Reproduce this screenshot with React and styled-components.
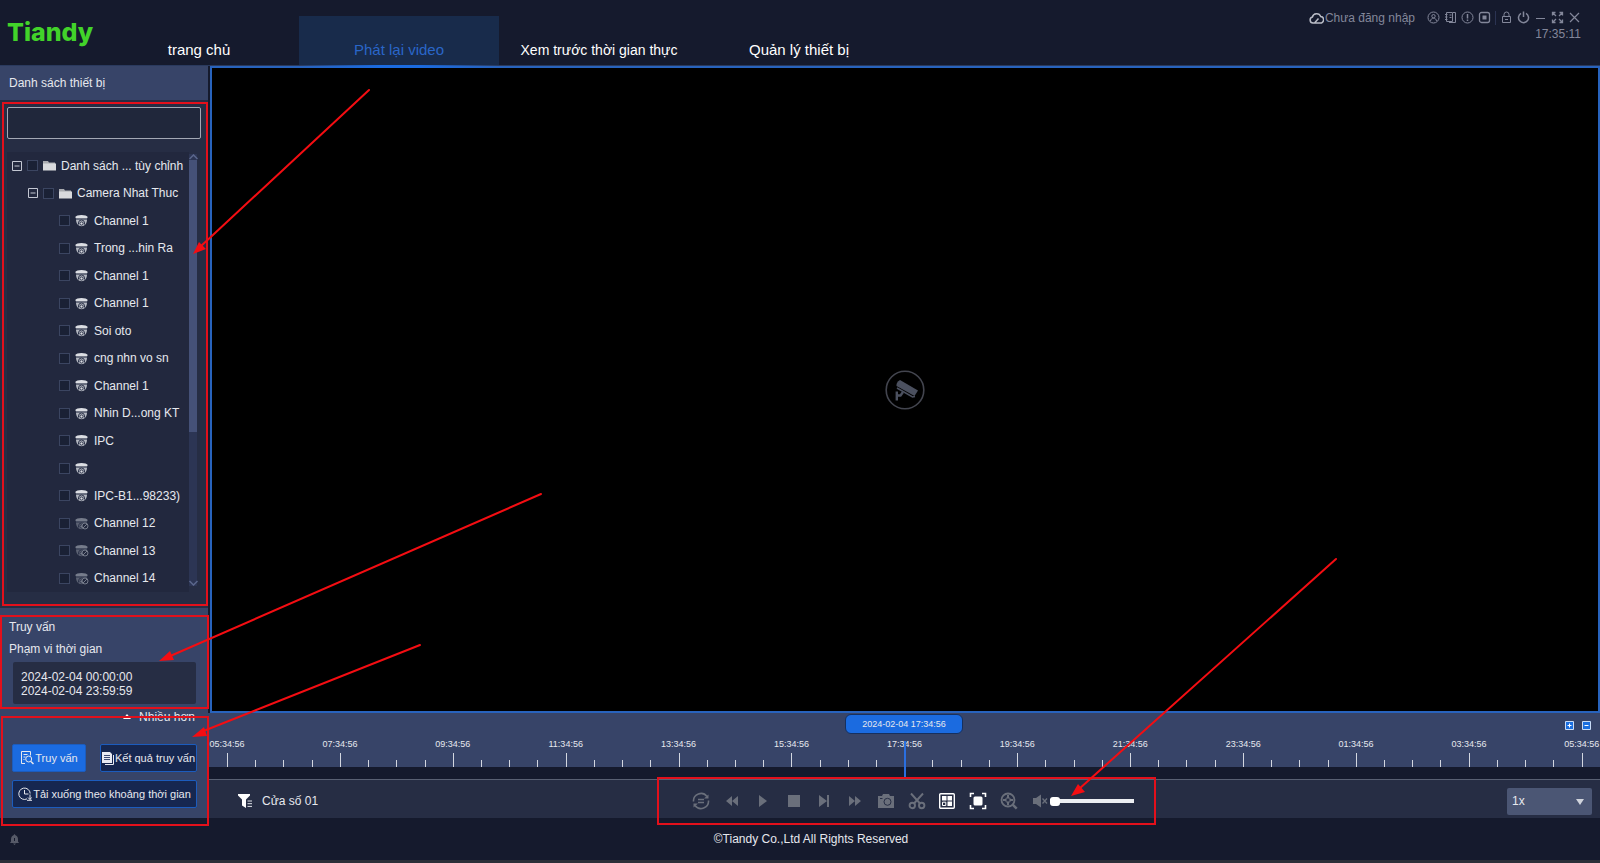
import React from 'react';
import styled, { createGlobalStyle, css } from 'styled-components';

const channels = [
  { name: 'Channel 1' },
  { name: 'Trong ...hin Ra' },
  { name: 'Channel 1' },
  { name: 'Channel 1' },
  { name: 'Soi oto' },
  { name: 'cng nhn vo sn' },
  { name: 'Channel 1' },
  { name: 'Nhin D...ong KT' },
  { name: 'IPC' },
  { name: '' },
  { name: 'IPC-B1...98233)' },
  { name: 'Channel 12', offline: true },
  { name: 'Channel 13', offline: true },
  { name: 'Channel 14', offline: true },
];

const hours = [
  '05:34:56', '07:34:56', '09:34:56', '11:34:56', '13:34:56', '15:34:56', '17:34:56',
  '19:34:56', '21:34:56', '23:34:56', '01:34:56', '03:34:56', '05:34:56',
];

const ticks = Array.from({ length: 49 }, (_, i) => i % 4 === 0);

export default function App() {
  return (
    <Page>
      <GlobalStyle />
      <Header>
        <Logo>Tiandy</Logo>
        <Nav>
          <Tab href="#home">trang chủ</Tab>
          <Tab href="#playback" $active>Phát lại video</Tab>
          <Tab href="#live" $small>Xem trước thời gian thực</Tab>
          <Tab href="#devices">Quản lý thiết bị</Tab>
        </Nav>
        <Status>
          <StatusRow>
            <Login type="button"><CloudIcon />Chưa đăng nhập</Login>
            <HeadButton type="button" aria-label="user"><UserIcon /></HeadButton>
            <HeadButton type="button" aria-label="log"><LogIcon /></HeadButton>
            <HeadButton type="button" aria-label="alarm"><AlertIcon /></HeadButton>
            <HeadButton type="button" aria-label="cpu"><ChipIcon /></HeadButton>
            <Divider />
            <HeadButton type="button" aria-label="lock"><LockIcon /></HeadButton>
            <HeadButton type="button" aria-label="power"><PowerIcon /></HeadButton>
            <HeadButton type="button" aria-label="minimize"><MinimizeIcon /></HeadButton>
            <HeadButton type="button" aria-label="full screen"><ExpandIcon /></HeadButton>
            <HeadButton type="button" aria-label="close"><CloseIcon /></HeadButton>
          </StatusRow>
          <Clock>17:35:11</Clock>
        </Status>
      </Header>

      <Body>
        <Sidebar>
          <SideTitle>Danh sách thiết bị</SideTitle>
          <DevicePanel>
            <Search type="text" aria-label="search" />
            <TreeArea>
              <Tree>
                <TreeRow $level={0}>
                  <Toggle type="button" aria-label="collapse"><MinusBox /></Toggle>
                  <Check type="checkbox" id="root-node" />
                  <FolderIcon />
                  <label htmlFor="root-node">Danh sách ... tùy chỉnh</label>
                </TreeRow>
                <TreeRow $level={1}>
                  <Toggle type="button" aria-label="collapse"><MinusBox /></Toggle>
                  <Check type="checkbox" id="group-node" />
                  <FolderIcon />
                  <label htmlFor="group-node">Camera Nhat Thuc</label>
                </TreeRow>
                {channels.map((c, i) => (
                  <TreeRow $level={3} key={i}>
                    <Check type="checkbox" id={`ch-${i}`} aria-label={c.name || 'camera'} />
                    <DomeIcon offline={c.offline} />
                    <label htmlFor={`ch-${i}`}>{c.name}</label>
                  </TreeRow>
                ))}
              </Tree>
              <Scrollbar>
                <Chevron up />
                <Thumb />
                <Chevron />
              </Scrollbar>
            </TreeArea>
          </DevicePanel>

          <QueryPanel>
            <QueryText>Truy vấn</QueryText>
            <QueryText as="label" htmlFor="range">Phạm vi thời gian</QueryText>
            <DateRange
              id="range"
              rows={2}
              readOnly
              value={'2024-02-04 00:00:00\n2024-02-04 23:59:59'}
            />
            <More type="button"><UpIcon />Nhiều hơn</More>
            <Actions>
              <Action type="button" $primary><QueryIcon />Truy vấn</Action>
              <Action type="button"><ResultIcon />Kết quả truy vấn</Action>
              <Action type="button" $wide><ClockIcon />Tải xuống theo khoảng thời gian</Action>
            </Actions>
          </QueryPanel>
        </Sidebar>

        <Main>
          <Video><CctvIcon /></Video>
          <Timeline>
            <Zoomers>
              <Zoomer type="button" aria-label="zoom in"><ScaleIcon plus /></Zoomer>
              <Zoomer type="button" aria-label="zoom out"><ScaleIcon /></Zoomer>
            </Zoomers>
            <Hours>
              {hours.map((h, i) => <Hour key={i}>{h}</Hour>)}
            </Hours>
            <Ticks>
              {ticks.map((major, i) => <Tick key={i} $major={major} />)}
            </Ticks>
            <NowBadge>2024-02-04 17:34:56</NowBadge>
            <NowLine />
          </Timeline>
          <Toolbar>
            <WindowName><FilterIcon />Cửa số 01</WindowName>
            <Controls>
              <Tool type="button" aria-label="sync"><SyncIcon /></Tool>
              <Tool type="button" aria-label="rewind"><Glyph><path d="M9 4v10L3 9zM15 4v10L9 9z" /></Glyph></Tool>
              <Tool type="button" aria-label="play"><Glyph><path d="M5 3l8 6-8 6z" /></Glyph></Tool>
              <Tool type="button" aria-label="stop"><Glyph><path d="M3 3h12v12H3z" /></Glyph></Tool>
              <Tool type="button" aria-label="next frame"><Glyph><path d="M4 3l8 6-8 6zM12 3h2v12h-2z" /></Glyph></Tool>
              <Tool type="button" aria-label="forward"><Glyph><path d="M3 4l6 5-6 5zM9 4l6 5-6 5z" /></Glyph></Tool>
              <Tool type="button" aria-label="snapshot"><CameraIcon /></Tool>
              <Tool type="button" aria-label="cut"><ScissorsIcon /></Tool>
              <Tool type="button" aria-label="layout" $on><LayoutIcon /></Tool>
              <Tool type="button" aria-label="fit" $on><FitIcon /></Tool>
              <Tool type="button" aria-label="digital zoom"><MagnifyIcon /></Tool>
              <Tool type="button" aria-label="mute"><MuteIcon /></Tool>
              <Volume type="range" min="0" max="100" defaultValue="0" aria-label="volume" />
            </Controls>
            <SpeedBox>
              <Speed aria-label="speed" defaultValue="1x">
                <option>1x</option>
                <option>2x</option>
                <option>4x</option>
              </Speed>
              <Caret />
            </SpeedBox>
          </Toolbar>
        </Main>
      </Body>

      <Footer>
        <BellIcon />
        <Copyright>©Tiandy Co.,Ltd All Rights Reserved</Copyright>
      </Footer>
      <Marks />
    </Page>
  );
}

/* ---------- icons ---------- */

const line = { fill: 'none', stroke: 'currentColor' };

const CloudIcon = () => (
  <svg width="15" height="12" viewBox="0 0 15 12" {...line} stroke="#b9bcc6" strokeWidth="1.5">
    <path d="M5.500 11H4a3 3 0 0 1-.6-5.900A4.300 4.300 0 0 1 11.700 4.600 3.200 3.200 0 0 1 11 11H5.500l4-4.500" />
  </svg>
);

const UserIcon = () => (
  <svg width="13" height="13" viewBox="0 0 13 13" {...line}>
    <circle cx="6.500" cy="6.500" r="5.500" />
    <circle cx="6.500" cy="5.200" r="1.700" />
    <path d="M3.500 10c.3-2 1.500-2.800 3-2.800s2.700.8 3 2.800" />
  </svg>
);

const LogIcon = () => (
  <svg width="13" height="13" viewBox="0 0 13 13" {...line}>
    <path d="M2.500 1.500h6v9h-6zM1 3.500h2.500M1 6h2.500M1 8.500h2.500M5.500 4h2M5.500 6.500h2M9 1.500h2.500v10H5" />
  </svg>
);

const AlertIcon = () => (
  <svg width="13" height="13" viewBox="0 0 13 13" {...line}>
    <circle cx="6.500" cy="6.500" r="5.500" />
    <path d="M6.500 3v4.500M6.500 8.600v1.400" strokeWidth="1.500" />
  </svg>
);

const ChipIcon = () => (
  <svg width="13" height="13" viewBox="0 0 13 13" {...line}>
    <rect x="1.500" y="1.500" width="10" height="10" rx="2" strokeWidth="1.300" />
    <path d="M4.500 4.500h4v4h-4z" fill="currentColor" stroke="none" />
  </svg>
);

const LockIcon = () => (
  <svg width="13" height="13" viewBox="0 0 13 13" {...line}>
    <path d="M2.500 5.500h8v6h-8zM4 5.500V3.500a2.500 2.500 0 0 1 5 0v2M5 8.500h3" />
  </svg>
);

const PowerIcon = () => (
  <svg width="13" height="13" viewBox="0 0 13 13" {...line} strokeWidth="1.500">
    <path d="M4 2.300a5 5 0 1 0 5 0M6.500 .5v5.500" />
  </svg>
);

const MinimizeIcon = () => (
  <svg width="13" height="13" viewBox="0 0 13 13" {...line}><path d="M2 7.500h9" /></svg>
);

const ExpandIcon = () => (
  <svg width="13" height="13" viewBox="0 0 13 13" {...line} strokeWidth="1.300">
    <path d="M1.500 4.500v-3h3M8.500 1.500h3v3M11.500 8.500v3h-3M4.500 11.500h-3v-3M2 2l3 3M11 2L8 5M2 11l3-3M11 11L8 8" />
  </svg>
);

const CloseIcon = () => (
  <svg width="13" height="13" viewBox="0 0 13 13" {...line} strokeWidth="1.200"><path d="M2 2l9 9M11 2l-9 9" /></svg>
);

const MinusBox = () => (
  <svg width="10" height="10" viewBox="0 0 10 10" fill="none" stroke="#c3c7d2">
    <path d="M.5 .5h9v9h-9zM2.500 5h5" />
  </svg>
);

const FolderIcon = () => (
  <svg width="13" height="11" viewBox="0 0 13 11">
    <path d="M0 2V1h5l1 1.500h6V4H0z" fill="#a9abb0" />
    <path d="M0 3.500h13V10.500H0z" fill="#d9dadd" />
  </svg>
);

function DomeIcon({ offline }) {
  const color = offline ? '#767c8b' : '#dcdee3';
  return (
    <svg width="14" height="13" viewBox="0 0 14 13">
      <path d="M.3 3C1 .2 12 .2 12.700 3L12 4.500H1z" fill={color} />
      <path d="M1 5.300h11c0 4-2 7-5.500 7S1 9.300 1 5.300z" fill={offline ? '#5c6273' : '#b4b8c1'} />
      <path d="M1 5.200h11" stroke="#3a4058" strokeWidth=".7" />
      <path d="M3.500 10.500V9a3 3 0 0 1 6 0v1.500" fill="none" stroke="#2c334a" />
      <circle cx="6.500" cy="9.500" r="1.600" fill={color} stroke="#2c334a" />
      {offline && (
        <>
          <circle cx="10" cy="9" r="3" fill="#22283e" stroke={color} />
          <path d="M8 11l4-4" stroke={color} />
        </>
      )}
    </svg>
  );
}

function Chevron({ up }) {
  return (
    <svg width="9" height="6" viewBox="0 0 9 6" fill="none" stroke="#5b678c" strokeWidth="1.500">
      <path d={up ? 'M.5 5l4-4 4 4' : 'M.5 1l4 4 4-4'} />
    </svg>
  );
}

const UpIcon = () => (
  <svg width="8" height="6" viewBox="0 0 8 6"><path d="M0 5l4-5 4 5z" fill="#fff" /></svg>
);

const QueryIcon = () => (
  <svg width="14" height="14" viewBox="0 0 14 14" {...line}>
    <path d="M5 12.500H1.500V.5h9v4M3.500 3.500h4M3.500 6h2M3.500 8.500h1" />
    <circle cx="8.700" cy="8" r="3" />
    <path d="M11 10.500l2.500 2.500" strokeWidth="1.500" />
  </svg>
);

const ResultIcon = () => (
  <svg width="12" height="13" viewBox="0 0 12 13">
    <path d="M3 12.500h8.500V3" fill="none" stroke="#e8ebf3" />
    <path d="M0 0h8l2 2v9H0z" fill="#e8ebf3" />
    <path d="M2 3.500h6M2 5.500h6M2 7.500h6" stroke="#3b4a73" />
  </svg>
);

const ClockIcon = () => (
  <svg width="14" height="14" viewBox="0 0 14 14" {...line}>
    <path d="M9 11.900A5.700 5.700 0 1 1 12.200 6.500M6.500 3v4h4M12 7.500v5M10 10.500l2 2 1.500-2M9 13.300h5" />
  </svg>
);

/* bullet camera in a ring, shown while nothing is playing */
const CctvIcon = () => (
  <svg width="40" height="40" viewBox="0 0 40 40">
    <circle cx="20" cy="20" r="18.800" fill="none" stroke="#43454f" strokeWidth="1.600" />
    <path d="M15 10l18 10.500-3.500 5.500-18-10q-.5-3.500 3.500-6z" fill="#4b505f" />
    <path d="M12 18l15.500 9 2.500-.5" fill="none" stroke="#4b505f" strokeWidth="1.600" />
    <path d="M11.800 21.500v9M12 25.500h3.500l2.500-3.500" fill="none" stroke="#4b505f" strokeWidth="2.400" />
  </svg>
);

function ScaleIcon({ plus }) {
  return (
    <svg width="9" height="9" viewBox="0 0 9 9">
      <path d="M.5 .5h8v8h-8z" fill="#1b6fe0" stroke="#c9dcf7" />
      <path d={plus ? 'M2.500 4.500h4M4.500 2.500v4' : 'M2.500 4.500h4'} stroke="#fff" />
    </svg>
  );
}

const FilterIcon = () => (
  <svg width="15" height="14" viewBox="0 0 15 14">
    <path d="M0 0h12v1.500L8 5.500V14L4 11.500v-6L0 1.500z" fill="#fff" />
    <path d="M9.500 7h4.500M9.500 9.700h4.500M9.500 12.400h4.500" stroke="#dfe2e8" />
  </svg>
);

const Glyph = ({ children }) => (
  <svg width="18" height="18" viewBox="0 0 18 18" fill="currentColor">{children}</svg>
);

const SyncIcon = () => (
  <svg width="18" height="18" viewBox="0 0 18 18" {...line} strokeWidth="1.600">
    <path d="M1.500 9.500A7.500 7.500 0 0 1 15 4.500M16.500 8.500A7.500 7.500 0 0 1 3 13.500M6 7.500h6M6 10.500h6" />
    <path d="M16.500 2.500v4h-4.500zM1.500 15.500v-4H6z" fill="currentColor" stroke="none" />
  </svg>
);

const CameraIcon = () => (
  <svg width="18" height="18" viewBox="0 0 18 18">
    <path d="M1 4h4l1-2h6l1 2h4v12H1z" fill="currentColor" />
    <circle cx="10.500" cy="9.800" r="3.500" fill="none" stroke="#262d44" />
    <path d="M3 6.500h2.500" stroke="#262d44" />
  </svg>
);

const ScissorsIcon = () => (
  <svg width="18" height="18" viewBox="0 0 18 18" {...line} strokeWidth="1.900">
    <path d="M3 1.500l9 10M15 1.500L6 11.500" />
    <circle cx="4.300" cy="13.500" r="2.700" />
    <circle cx="13.700" cy="13.500" r="2.700" />
  </svg>
);

const LayoutIcon = () => (
  <svg width="18" height="18" viewBox="0 0 18 18">
    <rect x="1.700" y="1.700" width="14.600" height="14.600" rx="1" fill="none" stroke="currentColor" strokeWidth="1.400" />
    <path d="M4 4h4.500v4.500H4zM9.500 4H14v4.500H9.500zM9.500 9.500H14V14H9.500z" fill="currentColor" />
    <path d="M4.500 10.200h3.300v3.300H4.500z" fill="none" stroke="currentColor" />
  </svg>
);

const FitIcon = () => (
  <svg width="18" height="18" viewBox="0 0 18 18">
    <path d="M1.500 5V1.500H5M13 1.500h3.500V5M16.500 13v3.500H13M5 16.500H1.500V13" {...line} strokeWidth="1.600" />
    <rect x="4.500" y="4.500" width="9" height="9" rx="1.500" fill="currentColor" />
  </svg>
);

const MagnifyIcon = () => (
  <svg width="18" height="18" viewBox="0 0 18 18" {...line} strokeWidth="1.800">
    <circle cx="8" cy="8" r="6.500" />
    <path d="M8 3v3.500M8 9.500V13M3 8h3.500M9.500 8H13" strokeWidth="2" />
    <circle cx="8" cy="8" r="2.500" strokeWidth="1" />
    <path d="M12.700 12.700l4 4" strokeWidth="2.500" />
  </svg>
);

const MuteIcon = () => (
  <svg width="16" height="14" viewBox="0 0 16 14">
    <path d="M1 4h3l5-3.500v13L4 10H1z" fill="currentColor" />
    <path d="M10.500 4.500l4.500 5M15 4.500l-4.500 5" stroke="currentColor" strokeWidth="1.300" />
  </svg>
);

const BellIcon = () => (
  <svg width="9" height="11" viewBox="0 0 9 11" fill="#565a68">
    <path d="M4.500 0l1 1.200C7.500 2 8 3.500 8 5.500v2l1 1.500H0l1-1.500v-2c0-2 .5-3.500 2.500-4.300zM3 9.500h3L4.500 11z" />
    <path d="M4.500 4v3" stroke="#151a2d" />
  </svg>
);

/* red callouts drawn over the whole window */
const Marks = () => (
  <MarkLayer width="1600" height="863" viewBox="0 0 1600 863" aria-hidden="true">
    <g fill="none" stroke="#e3101b" strokeWidth="2">
      <path d="M3 103h204v502H3z" />
      <path d="M1 616h207v92H1z" />
      <path d="M2 717h206v108H2z" />
      <path d="M658 778h497v46H658z" />
    </g>
    <g stroke="#f40d12" strokeWidth="2" fill="#f40d12">
      <path d="M369 90L200 247M541 494L168 657M420 645L201 732M1336 559L1079 789" strokeLinecap="round" />
      <path stroke="none" d="M193 254l6-12 7 7zM159 661l11-10 4 9zM192 737l12-10 3 9zM1071 796l7-12 7 8z" />
    </g>
  </MarkLayer>
);

/* ---------- layout ---------- */

const GlobalStyle = createGlobalStyle`
  * { box-sizing: border-box; }
  body {
    margin: 0;
    background: #151a2d;
    color: #e6e8ee;
    font-family: "Liberation Sans", Arial, sans-serif;
    font-size: 12px;
  }
  button, input, select, textarea { font: inherit; color: inherit; }
  svg { flex: none; display: block; }
`;

const bareButton = css`
  display: flex;
  align-items: center;
  justify-content: center;
  padding: 0;
  border: 0;
  background: none;
  cursor: pointer;
`;

const Page = styled.div`
  position: relative;
  display: flex;
  flex-direction: column;
  min-height: 100vh;
  overflow: hidden;
`;

const Header = styled.header`
  display: flex;
  height: 66px;
  border-bottom: 1px solid #2a3a5e;
`;

const Logo = styled.div`
  width: 99px;
  padding: 16px 0 0 7px;
  color: #42d32a;
  font-family: Inter, sans-serif;
  font-size: 25px;
  font-weight: 800;
  line-height: 32px;
`;

const Nav = styled.nav`
  display: flex;
  align-items: flex-end;
`;

const Tab = styled.a`
  position: relative;
  display: flex;
  align-items: flex-end;
  justify-content: center;
  width: 200px;
  height: 49px;
  padding-bottom: 7px;
  color: #fff;
  font-size: ${(p) => (p.$small ? '14px' : '15px')};
  line-height: 16px;
  text-decoration: none;
  ${(p) => p.$active && css`
    color: #2a66c8;
    background: #182b4b;
    &::after {
      content: "";
      position: absolute;
      right: 0;
      bottom: -3px;
      left: 0;
      height: 3px;
      background: linear-gradient(90deg, transparent, #1b6be0 40%, #1b6be0 60%, transparent);
    }
  `}
`;

const Status = styled.div`
  display: flex;
  flex-direction: column;
  align-items: flex-end;
  margin-left: auto;
  padding: 9px 19px 0 0;
  color: #83879a;
`;

const StatusRow = styled.div`
  display: flex;
  align-items: center;
  gap: 4px;
  height: 17px;
`;

const Login = styled.button`
  ${bareButton}
  gap: 1px;
  margin-right: 8px;
`;

const HeadButton = styled.button`
  ${bareButton}
  width: 13px;
`;

const Divider = styled.span`
  width: 1px;
  height: 14px;
  background: #2b3352;
`;

const Clock = styled.time`
  line-height: 17px;
`;

const Body = styled.div`
  display: flex;
  flex: 1;
`;

const Sidebar = styled.aside`
  display: flex;
  flex-direction: column;
  width: 208px;
  flex: none;
`;

const SideTitle = styled.h2`
  margin: 0;
  padding: 0 9px;
  background: #374468;
  font-size: 12px;
  font-weight: normal;
  line-height: 34px;
`;

const DevicePanel = styled.section`
  flex: 1;
  padding: 7px 7px 16px;
  background: #262d44;
`;

const Search = styled.input`
  display: block;
  width: 194px;
  height: 32px;
  border: 1px solid #a3a8b4;
  border-radius: 2px;
  background: #20273b;
`;

const TreeArea = styled.div`
  display: flex;
  justify-content: space-between;
  margin-top: 13px;
  padding-right: 4px;
`;

const Tree = styled.div`
  display: grid;
  grid-auto-rows: 1fr;
  flex: 1;
  min-height: 440px;
  background: #22283e;
`;

const TreeRow = styled.div`
  display: flex;
  align-items: center;
  gap: 5px;
  padding-left: ${(p) => 4 + p.$level * 16}px;
  white-space: nowrap;
`;

const Toggle = styled.button`
  ${bareButton}
  width: 11px;
`;

const Check = styled.input`
  appearance: none;
  width: 11px;
  height: 11px;
  margin: 0;
  border: 1px solid #3b4561;
  background: #1a2135;
`;

const Scrollbar = styled.div`
  display: flex;
  flex-direction: column;
  align-items: center;
  width: 8px;
  margin: 2px 0 6px;
  background: #2c3554;
`;

const Thumb = styled.div`
  width: 8px;
  height: 272px;
  margin-bottom: auto;
  background: #455178;
`;

const QueryPanel = styled.section`
  display: flex;
  flex-direction: column;
  gap: 4px;
  padding: 10px 11px 10px 12px;
  background: #374468;
`;

const QueryText = styled.div`
  margin-left: -3px;
  line-height: 18px;
`;

const DateRange = styled.textarea`
  height: 42px;
  margin: 0 1px;
  padding: 8px;
  border: 0;
  border-radius: 2px;
  background: #262d44;
  line-height: 14px;
  resize: none;
  overflow: hidden;
`;

const More = styled.button`
  ${bareButton}
  align-self: flex-end;
  gap: 8px;
  height: 18px;
  margin-right: 2px;
`;

const Actions = styled.div`
  display: grid;
  grid-template-columns: 74px 97px;
  justify-content: space-between;
  gap: 8px;
  margin-top: 14px;
`;

const Action = styled.button`
  ${bareButton}
  gap: 1px;
  height: 28px;
  border: 1px solid #1c5cbd;
  border-radius: 2px;
  background: ${(p) => (p.$primary ? '#1b6be0' : '#162750')};
  font-size: 11px;
  white-space: nowrap;
  grid-column: ${(p) => (p.$wide ? '1 / -1' : 'auto')};
`;

const Main = styled.main`
  display: flex;
  flex-direction: column;
  flex: 1;
  min-width: 0;
`;

const Video = styled.div`
  display: flex;
  align-items: center;
  justify-content: center;
  flex: 1;
  margin-left: 2px;
  border: 2px solid #2863bd;
  background: #000;
`;

const Timeline = styled.div`
  position: relative;
  display: flex;
  flex-direction: column;
  height: 54px;
  margin-bottom: 12px;
  background: #374468;
`;

const Zoomers = styled.div`
  display: flex;
  justify-content: flex-end;
  gap: 8px;
  padding: 8px 9px;
`;

const Zoomer = styled.button`
  ${bareButton}
`;

const Hours = styled.div`
  display: flex;
  justify-content: space-between;
  padding-left: 1px;
  font-size: 9px;
  line-height: 12px;
`;

const Hour = styled.span`
  width: 36px;
  text-align: center;
`;

const Ticks = styled.div`
  display: flex;
  align-items: flex-end;
  justify-content: space-between;
  flex: 1;
  margin: 0 17px 0 19px;
`;

const Tick = styled.i`
  width: 1px;
  height: ${(p) => (p.$major ? '14px' : '7px')};
  background: #d3d7e0;
`;

const NowBadge = styled.div`
  position: absolute;
  top: 1px;
  left: 50%;
  width: 118px;
  transform: translateX(-50%);
  border: 1px solid #16305f;
  border-radius: 6px;
  background: #1b6be0;
  font-size: 9px;
  line-height: 18px;
  text-align: center;
`;

const NowLine = styled.div`
  position: absolute;
  top: 28px;
  left: 50%;
  width: 2px;
  height: 36px;
  background: #2a6fe0;
`;

const Toolbar = styled.div`
  display: grid;
  grid-template-columns: 1fr auto 1fr;
  align-items: center;
  height: 39px;
  padding: 4px 8px 0 20px;
  border-top: 1px solid #596073;
  background: #262d44;
`;

const WindowName = styled.div`
  display: flex;
  align-items: center;
  gap: 9px;
  padding-left: 10px;
`;

const Controls = styled.div`
  display: flex;
  align-items: center;
  width: 448px;
`;

const Tool = styled.button`
  ${bareButton}
  flex: 1;
  color: ${(p) => (p.$on ? '#fff' : '#6a6f7b')};
`;

const Volume = styled.input`
  appearance: none;
  width: 84px;
  height: 10px;
  margin: 0 0 0 -5px;
  background: linear-gradient(#eceef2, #eceef2) center / 100% 4px no-repeat;
  &::-webkit-slider-thumb {
    appearance: none;
    width: 10px;
    height: 9px;
    border-radius: 3px;
    background: #fff;
  }
`;

const SpeedBox = styled.div`
  position: relative;
  justify-self: end;
`;

const Speed = styled.select`
  appearance: none;
  display: block;
  width: 85px;
  height: 27px;
  padding: 0 5px;
  border: 0;
  border-radius: 2px;
  background: #4b5674;
`;

const Caret = styled.span`
  position: absolute;
  top: 11px;
  right: 8px;
  border: 4px solid transparent;
  border-top: 6px solid #d0d4dc;
  border-bottom: 0;
  pointer-events: none;
`;

const Footer = styled.footer`
  display: grid;
  grid-template-columns: 1fr auto 1fr;
  align-items: center;
  height: 45px;
  padding-left: 10px;
  border-bottom: 3px solid #2b2f38;
`;

const Copyright = styled.span`
  margin-left: 12px;
`;

const MarkLayer = styled.svg`
  position: absolute;
  top: 0;
  left: 0;
  pointer-events: none;
`;
